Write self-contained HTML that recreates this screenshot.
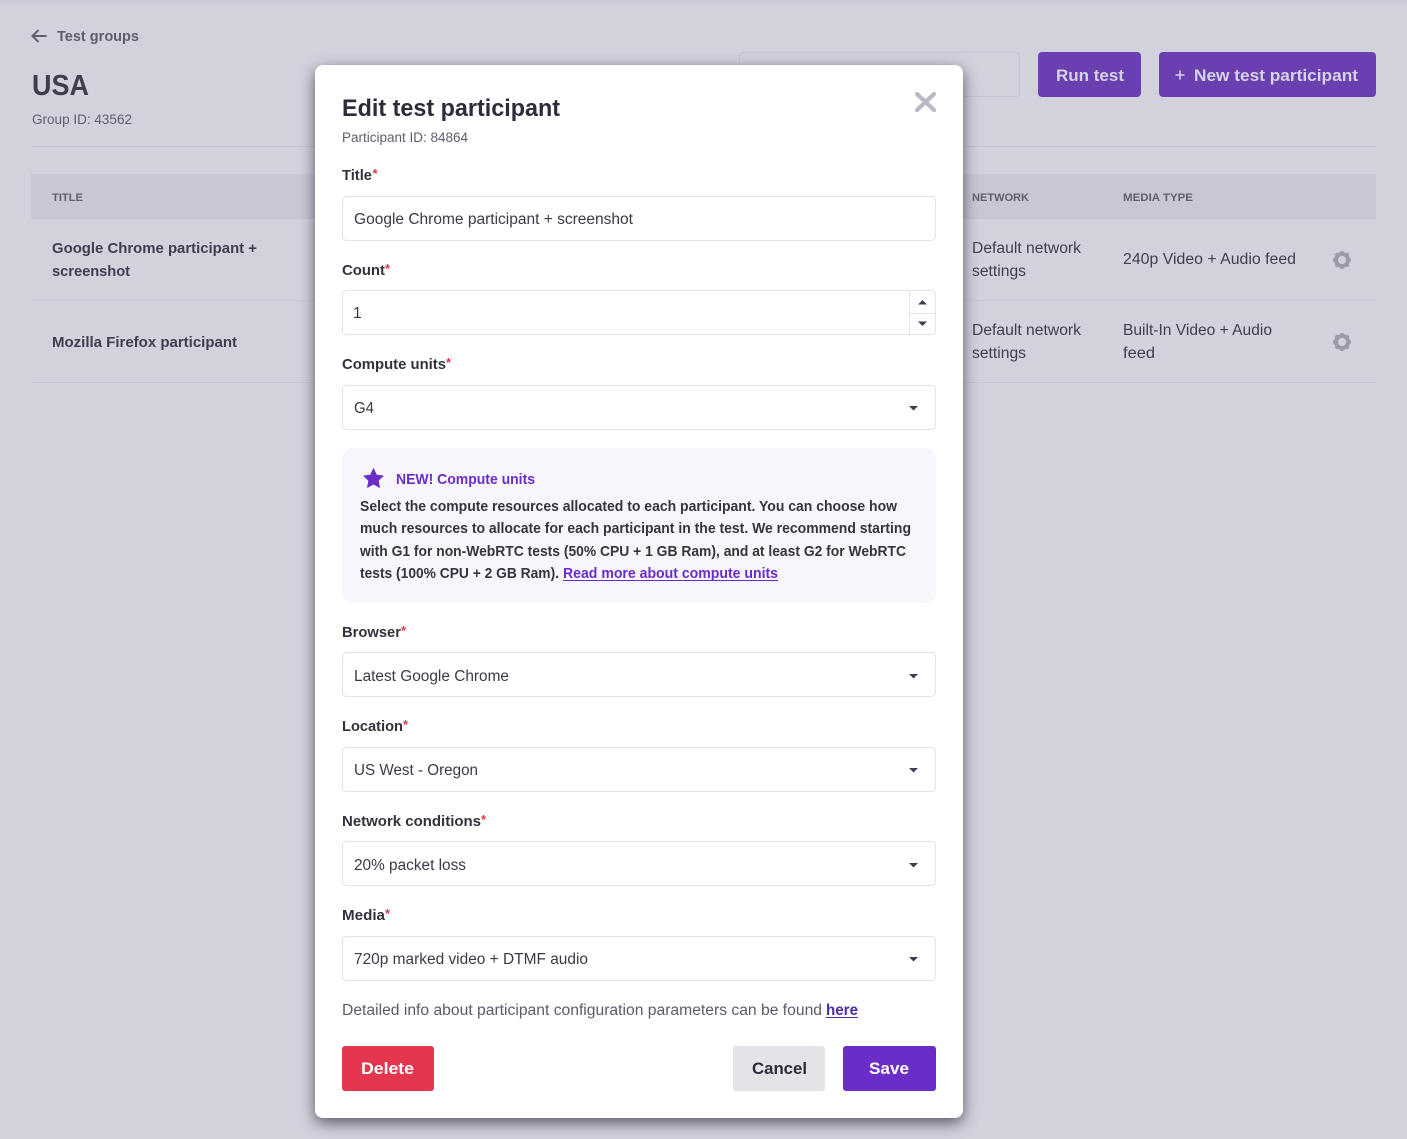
<!DOCTYPE html>
<html lang="en"><head><meta charset="utf-8"><title>Edit test participant</title>
<style>
html,body{margin:0;padding:0;width:1407px;height:1139px;overflow:hidden;background:#d2d2dd}
svg{display:block;position:absolute;left:0;top:0}
text{font-family:"Liberation Sans",sans-serif;white-space:pre}
.b{font-weight:700}
.d{fill:#5e5e70}.dd{fill:#3e3e4e}
.h{font-size:11px;font-weight:700;fill:#5e5e70}
.l{font-size:15px;font-weight:700;fill:#32323f}
.v{font-size:15.5px;fill:#3a3a48}
.c{font-size:15px;font-weight:700;fill:#34343f}
.r{fill:#e5364f;font-size:13px;font-weight:700}
.box{fill:#fff;stroke:#e2e2e8;stroke-width:1}
.bd{fill:none}
</style></head><body>
<div style="position:absolute;left:0;top:0;width:1407px;height:6px;background:linear-gradient(#c7c7d3,#d2d2dd)"></div>
<div style="position:absolute;left:739px;top:52px;width:279px;height:43px;border:1px solid #c6c6d3;border-radius:4px"></div>
<div style="position:absolute;left:1038px;top:52px;width:103px;height:45px;background:#6a40b0;border-radius:4px"></div>
<div style="position:absolute;left:1159px;top:52px;width:217px;height:45px;background:#6a40b0;border-radius:4px"></div>
<div style="position:absolute;left:31px;top:146px;width:1345px;height:1px;background:#c3c3d0"></div>
<div style="position:absolute;left:31px;top:174px;width:1345px;height:45px;background:#c8c8d4"></div>
<div style="position:absolute;left:31px;top:300px;width:1345px;height:1px;background:#c6c6d2"></div>
<div style="position:absolute;left:31px;top:382px;width:1345px;height:1px;background:#c6c6d2"></div>
<div style="position:absolute;left:315px;top:65px;width:648px;height:1053px;background:#fff;border-radius:8px;box-shadow:0 5px 15px rgba(35,35,55,.7)"></div>
<svg width="1407" height="1139" viewBox="0 0 1407 1139" xmlns="http://www.w3.org/2000/svg">
<!-- back arrow -->
<path d="M46.5 36H32.5M38.5 30L32.5 36L38.5 42" fill="none" stroke="#5e5e70" stroke-width="2"/>
<text x="57" y="41" class="b d" font-size="15" textLength="82" lengthAdjust="spacingAndGlyphs">Test groups</text>
<text x="32" y="95" class="b dd" font-size="29" textLength="57" lengthAdjust="spacingAndGlyphs">USA</text>
<text x="32" y="124" class="d" font-size="13.5" textLength="100" lengthAdjust="spacingAndGlyphs">Group ID: 43562</text>
<text x="52" y="201" class="h" textLength="31" lengthAdjust="spacingAndGlyphs">TITLE</text>
<text x="972" y="201" class="h" textLength="57" lengthAdjust="spacingAndGlyphs">NETWORK</text>
<text x="1123" y="201" class="h" textLength="70" lengthAdjust="spacingAndGlyphs">MEDIA TYPE</text>
<text x="52" y="253" class="b dd" font-size="15" textLength="205" lengthAdjust="spacingAndGlyphs">Google Chrome participant +</text>
<text x="52" y="276" class="b dd" font-size="15" textLength="78" lengthAdjust="spacingAndGlyphs">screenshot</text>
<text x="52" y="347" class="b dd" font-size="15" textLength="185" lengthAdjust="spacingAndGlyphs">Mozilla Firefox participant</text>
<text x="972" y="253" class="dd" font-size="15.5" textLength="109" lengthAdjust="spacingAndGlyphs">Default network</text>
<text x="972" y="276" class="dd" font-size="15.5" textLength="54" lengthAdjust="spacingAndGlyphs">settings</text>
<text x="972" y="335" class="dd" font-size="15.5" textLength="109" lengthAdjust="spacingAndGlyphs">Default network</text>
<text x="972" y="358" class="dd" font-size="15.5" textLength="54" lengthAdjust="spacingAndGlyphs">settings</text>
<text x="1123" y="264" class="dd" font-size="15.5" textLength="173" lengthAdjust="spacingAndGlyphs">240p Video + Audio feed</text>
<text x="1123" y="335" class="dd" font-size="15.5" textLength="149" lengthAdjust="spacingAndGlyphs">Built-In Video + Audio</text>
<text x="1123" y="358" class="dd" font-size="15.5" textLength="32" lengthAdjust="spacingAndGlyphs">feed</text>
<!-- gears -->
<g fill="none" stroke="#9a9aa8">
<circle cx="1342" cy="260" r="6" stroke-width="4"/>
<path d="M1342 251v18M1333 260h18M1335.600 253.600l12.800 12.800M1348.400 253.600l-12.800 12.800" stroke-width="3" stroke-dasharray="3 12"/>
<circle cx="1342" cy="342" r="6" stroke-width="4"/>
<path d="M1342 333v18M1333 342h18M1335.600 335.600l12.800 12.800M1348.400 335.600l-12.800 12.800" stroke-width="3" stroke-dasharray="3 12"/>
</g>
<!-- header buttons -->
<text x="1056" y="81" class="b" fill="#d6d2e6" font-size="17" textLength="68" lengthAdjust="spacingAndGlyphs">Run test</text>
<path d="M1175.500 75h9M1180 70.500v9" stroke="#d6d2e6" stroke-width="1.600"/>
<text x="1194" y="81" class="b" fill="#d6d2e6" font-size="17" textLength="164" lengthAdjust="spacingAndGlyphs">New test participant</text>
<!-- modal head -->
<text x="342" y="116" class="b" fill="#2c2c3a" font-size="24" textLength="218" lengthAdjust="spacingAndGlyphs">Edit test participant</text>
<text x="342" y="142" fill="#5e5e70" font-size="13.5" textLength="126" lengthAdjust="spacingAndGlyphs">Participant ID: 84864</text>
<path d="M917 94L934 110M934 94L917 110" stroke="#b9b9c6" stroke-width="4.200" stroke-linecap="round"/>
<!-- Title -->
<text x="342" y="180" class="l" textLength="30" lengthAdjust="spacingAndGlyphs">Title</text><text x="372.500" y="178" class="r">*</text>
<rect class="box" x="342.500" y="196.500" width="593" height="44" rx="4"/>
<text x="354" y="224" class="v" textLength="279" lengthAdjust="spacingAndGlyphs">Google Chrome participant + screenshot</text>
<!-- Count -->
<text x="342" y="275" class="l" textLength="43" lengthAdjust="spacingAndGlyphs">Count</text><text x="385" y="273" class="r">*</text>
<rect class="box" x="342.500" y="290.500" width="593" height="44" rx="4"/>
<path d="M909.500 291v43M910 313.500h25" stroke="#e2e2e8" fill="none"/>
<text x="353" y="318" class="v">1</text>
<path d="M918 304.500l4.500-4.500 4.500 4.500zM918 321.500l4.500 4.500 4.500-4.500z" fill="#3e3e4e"/>
<!-- Compute -->
<text x="342" y="369" class="l" textLength="104" lengthAdjust="spacingAndGlyphs">Compute units</text><text x="446" y="367" class="r">*</text>
<rect class="box" x="342.500" y="385.500" width="593" height="44" rx="4"/>
<text x="354" y="413" class="v" textLength="20" lengthAdjust="spacingAndGlyphs">G4</text>
<path d="M909 406l4.500 4.500 4.500-4.500z" fill="#3e3e4e"/>
<!-- callout -->
<rect x="342" y="448" width="594" height="155" rx="11" fill="#f8f6fd"/>
<path d="M373.500 467.800l3.200 6.800 7.300 1-5.300 5.100 1.300 7.400-6.500-3.600-6.500 3.600 1.300-7.400-5.300-5.100 7.300-1z" fill="#6a2dc8"/>
<text x="396" y="484" class="b" fill="#6a2dc8" font-size="15" textLength="139" lengthAdjust="spacingAndGlyphs">NEW! Compute units</text>
<text x="360" y="511" class="c" textLength="537" lengthAdjust="spacingAndGlyphs">Select the compute resources allocated to each participant. You can choose how</text>
<text x="360" y="533" class="c" textLength="551" lengthAdjust="spacingAndGlyphs">much resources to allocate for each participant in the test. We recommend starting</text>
<text x="360" y="556" class="c" textLength="546" lengthAdjust="spacingAndGlyphs">with G1 for non-WebRTC tests (50% CPU + 1 GB Ram), and at least G2 for WebRTC</text>
<text x="360" y="578" class="c" textLength="199" lengthAdjust="spacingAndGlyphs">tests (100% CPU + 2 GB Ram).</text>
<text x="563" y="578" class="b" fill="#6a2dc8" font-size="15" textLength="215" lengthAdjust="spacingAndGlyphs">Read more about compute units</text>
<path d="M563 580.500h215" stroke="#6a2dc8" stroke-width="1"/>
<!-- Browser -->
<text x="342" y="637" class="l" textLength="59" lengthAdjust="spacingAndGlyphs">Browser</text><text x="401" y="635" class="r">*</text>
<rect class="box" x="342.500" y="652.500" width="593" height="44" rx="4"/>
<text x="354" y="681" class="v" textLength="155" lengthAdjust="spacingAndGlyphs">Latest Google Chrome</text>
<path d="M909 674l4.500 4.500 4.500-4.500z" fill="#3e3e4e"/>
<!-- Location -->
<text x="342" y="731" class="l" textLength="61" lengthAdjust="spacingAndGlyphs">Location</text><text x="403" y="729" class="r">*</text>
<rect class="box" x="342.500" y="747.500" width="593" height="44" rx="4"/>
<text x="354" y="775" class="v" textLength="124" lengthAdjust="spacingAndGlyphs">US West - Oregon</text>
<path d="M909 768l4.500 4.500 4.500-4.500z" fill="#3e3e4e"/>
<!-- Network -->
<text x="342" y="826" class="l" textLength="139" lengthAdjust="spacingAndGlyphs">Network conditions</text><text x="481" y="824" class="r">*</text>
<rect class="box" x="342.500" y="841.500" width="593" height="44" rx="4"/>
<text x="354" y="870" class="v" textLength="112" lengthAdjust="spacingAndGlyphs">20% packet loss</text>
<path d="M909 863l4.500 4.500 4.500-4.500z" fill="#3e3e4e"/>
<!-- Media -->
<text x="342" y="920" class="l" textLength="43" lengthAdjust="spacingAndGlyphs">Media</text><text x="385" y="918" class="r">*</text>
<rect class="box" x="342.500" y="936.500" width="593" height="44" rx="4"/>
<text x="354" y="964" class="v" textLength="234" lengthAdjust="spacingAndGlyphs">720p marked video + DTMF audio</text>
<path d="M909 957l4.500 4.500 4.500-4.500z" fill="#3e3e4e"/>
<!-- footer -->
<text x="342" y="1015" fill="#5a5a6c" font-size="15.500" textLength="480" lengthAdjust="spacingAndGlyphs">Detailed info about participant configuration parameters can be found</text>
<text x="826" y="1015" class="b" fill="#4e2ca6" font-size="15.500" textLength="32" lengthAdjust="spacingAndGlyphs">here</text>
<path d="M826 1017.500h32" stroke="#4e2ca6" stroke-width="1"/>
<rect x="342" y="1046" width="92" height="45" rx="3" fill="#e5364f"/>
<text x="361" y="1074" class="b" fill="#fff" font-size="17" textLength="53" lengthAdjust="spacingAndGlyphs">Delete</text>
<rect x="733" y="1046" width="92" height="45" rx="3" fill="#e3e3e8"/>
<text x="752" y="1074" class="b" fill="#2c2c3a" font-size="17" textLength="55" lengthAdjust="spacingAndGlyphs">Cancel</text>
<rect x="843" y="1046" width="93" height="45" rx="3" fill="#6a2dc8"/>
<text x="869" y="1074" class="b" fill="#fff" font-size="17" textLength="40" lengthAdjust="spacingAndGlyphs">Save</text>
</svg>
</body></html>
